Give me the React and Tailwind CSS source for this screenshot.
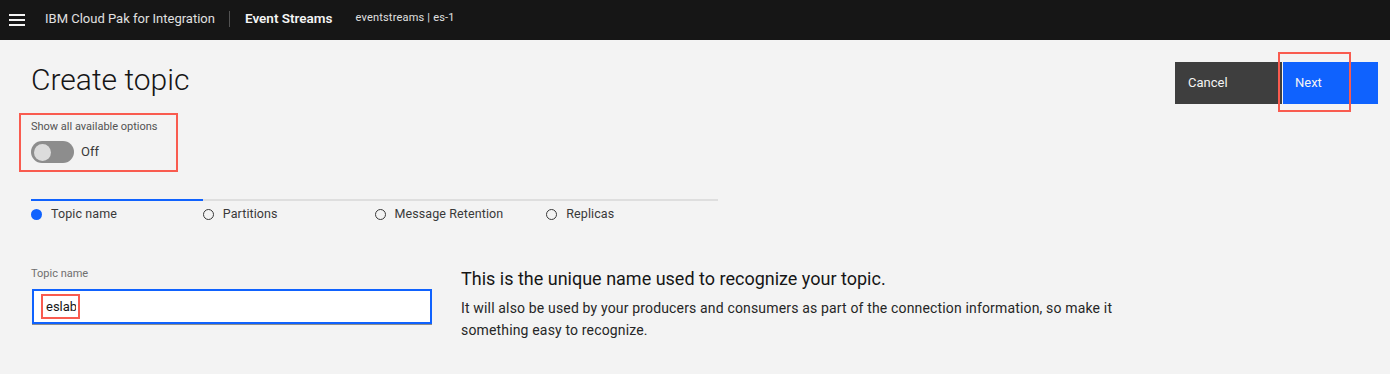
import { useState } from 'react'

const steps = ['Topic name', 'Partitions', 'Message Retention', 'Replicas']

function Header() {
  return (
    <header className="h-10 bg-[#161616] flex items-center pb-[3px] text-white">
      <div className="w-[50px] flex items-center pl-[9px] pt-[3px]">
        <svg width="16" height="12" viewBox="0 0 16 12">
          <rect x="0" y="0" width="16" height="2" fill="#f4f4f4" />
          <rect x="0" y="5" width="16" height="2" fill="#f4f4f4" />
          <rect x="0" y="10" width="16" height="2" fill="#f4f4f4" />
        </svg>
      </div>
      <span className="text-[13px] text-[#e0e0e0] ml-[-5px]">IBM Cloud Pak for Integration</span>
      <span className="ml-[14px] mr-[15px] h-4 w-px bg-[#525252]" />
      <span className="text-[13.5px] font-semibold text-[#f4f4f4]">Event Streams</span>
      <span className="ml-[23px] text-[11px] tracking-[0.2px] text-[#e0e0e0]">eventstreams | es-1</span>
    </header>
  )
}

export default function App() {
  const [on, setOn] = useState(false)
  const [name, setName] = useState('eslab')

  return (
    <div className="min-h-[374px] bg-[#f3f3f3] font-['Roboto',sans-serif] text-[#161616]">
      <Header />

      <div className="flex justify-between pl-[31px] pr-[12px]">
        <div>
          <h1 className="text-[30px] font-light leading-9 mt-[22px]">Create topic</h1>
          {/* options toggle */}
          <div className="mt-[15px] ml-[-12px] w-[159px] h-[59px] border-2 border-[#f95b4f] pl-[10px] pt-[4px]">
            <div className="text-[11px] text-[#525252] leading-4">Show all available options</div>
            <button
              onClick={() => setOn(!on)}
              className="mt-[6px] flex items-center gap-[7px]"
            >
              <span className={`w-[43px] h-[22px] rounded-full flex items-center px-[3px] ${on ? 'bg-[#24a148] justify-end' : 'bg-[#8d8d8d]'}`}>
                <span className="w-[17px] h-[17px] rounded-full bg-[#dcdcdc]" />
              </span>
              <span className="text-[13px] text-[#393939]">{on ? 'On' : 'Off'}</span>
            </button>
          </div>
        </div>

        <div className="flex mt-[22px] h-[42px]">
          <button className="w-[107px] h-[42px] bg-[#3e3e3e] text-[#f4f4f4] text-[13px] text-left pl-[13px]">Cancel</button>
          <div className="relative">
            <button className="w-[95px] h-[42px] bg-[#0f62fe] text-[#f4f4f4] text-[13px] text-left pl-[12px] ml-px">Next</button>
            <div className="absolute left-[-4px] top-[-10px] w-[73px] h-[60px] border-2 border-[#f95b4f]" />
          </div>
        </div>
      </div>

      {/* progress */}
      <div className="ml-[31px] mt-[27px] w-[687px]">
        <div className="flex h-[2px] bg-[#dedede]">
          <div className="w-[172px] h-[2px] bg-[#0f62fe]" />
        </div>
        <div className="flex mt-[3px]">
          {steps.map((s, i) => (
            <div key={s} className="w-[172px] flex items-center gap-[9px] text-[12.5px] tracking-[0.1px] text-[#393939] leading-5">
              <span className={`w-[11px] h-[11px] rounded-full ${i === 0 ? 'bg-[#0f62fe]' : 'border border-[#393939]'}`} />
              {s}
            </div>
          ))}
        </div>
      </div>

      {/* form */}
      <div className="flex ml-[31px] mt-[42px]">
        <div className="w-[401px]">
          <label className="block text-[11px] text-[#6f6f6f] leading-4">Topic name</label>
          <div className="mt-[7px] ml-px h-[35px] bg-white border-2 border-[#0f62fe] shadow-[0_1px_0_#8d8d8d] flex items-center pl-[7px]">
            <div className="border-2 border-[#f95b4f] h-[25px] flex items-center pl-[3px] pr-[2px]">
              <input
                value={name}
                onChange={e => setName(e.target.value)}
                className="w-[30px] outline-none text-[13px] text-[#161616] bg-transparent"
              />
            </div>
          </div>
        </div>
        <div className="ml-[29px] mt-[1px] w-[670px]">
          <h2 className="text-[18px] leading-6 text-[#161616]">This is the unique name used to recognize your topic.</h2>
          <p className="mt-[6px] text-[14px] tracking-[0.16px] leading-[22px] text-[#262626]">
            It will also be used by your producers and consumers as part of the connection information, so make it something easy to recognize.
          </p>
        </div>
      </div>
    </div>
  )
}
